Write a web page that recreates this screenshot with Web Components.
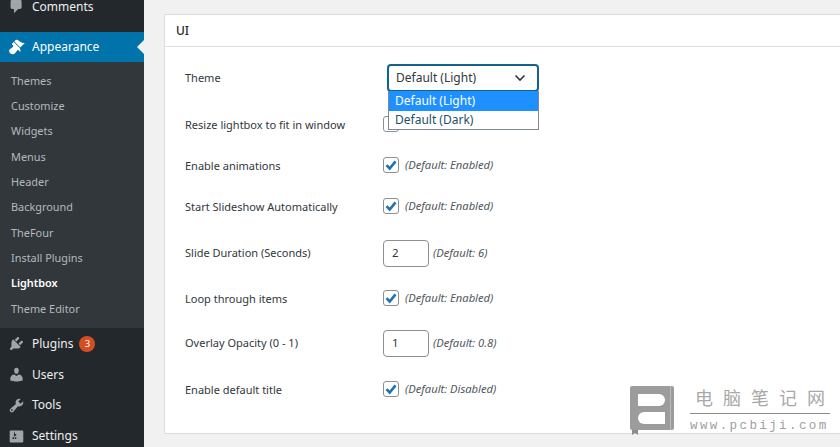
<!DOCTYPE html>
<html lang="en">
<head>
<meta charset="utf-8">
<title>Lightbox settings</title>
<style>
  html, body { margin: 0; height: 447px; overflow: hidden; background: #f1f1f1; }
  body { display: flex; font: 11.7px/1.3 "Noto Sans", sans-serif; color: #444; }
</style>
</head>
<body>
<wp-sidebar>
  <wp-menu-item icon="comments" style="margin-bottom:10px">Comments</wp-menu-item>
  <wp-menu-item icon="appearance" current>Appearance</wp-menu-item>
  <wp-submenu>
    <wp-sub-item>Themes</wp-sub-item>
    <wp-sub-item>Customize</wp-sub-item>
    <wp-sub-item>Widgets</wp-sub-item>
    <wp-sub-item>Menus</wp-sub-item>
    <wp-sub-item>Header</wp-sub-item>
    <wp-sub-item>Background</wp-sub-item>
    <wp-sub-item>TheFour</wp-sub-item>
    <wp-sub-item>Install Plugins</wp-sub-item>
    <wp-sub-item active>Lightbox</wp-sub-item>
    <wp-sub-item>Theme Editor</wp-sub-item>
  </wp-submenu>
  <wp-menu-item icon="plugins" badge="3">Plugins</wp-menu-item>
  <wp-menu-item icon="users">Users</wp-menu-item>
  <wp-menu-item icon="tools">Tools</wp-menu-item>
  <wp-menu-item icon="settings">Settings</wp-menu-item>
</wp-sidebar>

<settings-card heading="UI">
  <settings-row label="Theme" style="--h:47px">
    <theme-select value="Default (Light)"></theme-select>
  </settings-row>
  <settings-row label="Resize lightbox to fit in window" style="--h:47px">
    <check-field></check-field>
  </settings-row>
  <settings-row label="Enable animations" style="--h:35px">
    <check-field hint="(Default: Enabled)"></check-field>
  </settings-row>
  <settings-row label="Start Slideshow Automatically" style="--h:47px">
    <check-field hint="(Default: Enabled)"></check-field>
  </settings-row>
  <settings-row label="Slide Duration (Seconds)" style="--h:45px">
    <number-field value="2" hint="(Default: 6)"></number-field>
  </settings-row>
  <settings-row label="Loop through items" style="--h:47px">
    <check-field hint="(Default: Enabled)"></check-field>
  </settings-row>
  <settings-row label="Overlay Opacity (0 - 1)" style="--h:41px">
    <number-field value="1" hint="(Default: 0.8)"></number-field>
  </settings-row>
  <settings-row label="Enable default title" style="--h:53px">
    <check-field hint="(Default: Disabled)"></check-field>
  </settings-row>
</settings-card>

<site-watermark></site-watermark>

<script>
const ICONS = {
  comments: "M5 2h9c1.1 0 2 .9 2 2v7c0 1.1-.9 2-2 2h-2l-5 5v-5H5c-1.1 0-2-.9-2-2V4c0-1.1.9-2 2-2z",
  appearance: "M14.48 11.06L7.41 3.99l1.5-1.5c.5-.56 2.3-.47 3.51.32 1.21.8 1.43 1.28 2.91 2.1 1.18.64 2.45 1.26 4.45.85zm-.71.71L6.7 4.7 4.93 6.47c-.39.39-.39 1.02 0 1.41l1.06 1.06c.39.39.39 1.03 0 1.42-.6.6-1.43 1.11-2.21 1.69-.35.26-.7.53-1.01.84C1.43 13.23.4 15.6 2.6 17.8c2.21 2.2 4.57 1.17 5.93-.19.31-.31.58-.66.84-1.01.58-.78 1.09-1.61 1.69-2.21.39-.39 1.02-.39 1.41 0l1.06 1.06c.39.39 1.02.39 1.41 0z",
  plugins: "M13.11 4.36L9.87 7.6 8 5.73l3.24-3.24c.35-.34 1.05-.2 1.56.32.52.51.66 1.21.31 1.55zm-8 1.77l.91-1.12 9.01 9.01-1.19.84c-.71.71-2.63 1.16-3.82 1.16H6.14L4.9 17.26c-.59.59-1.54.59-2.12 0-.59-.58-.59-1.53 0-2.12l1.24-1.24v-3.88c0-1.13.4-3.19 1.09-3.89zm7.26 3.97l3.24-3.24c.34-.35 1.04-.21 1.55.31.52.51.66 1.21.31 1.55l-3.24 3.25z",
  users: "M10 9.25c-2.27 0-2.73-3.44-2.73-3.44C7 4.02 7.82 2 9.97 2c2.16 0 2.98 2.02 2.71 3.81 0 0-.41 3.44-2.68 3.44zm0 2.57L12.72 10c2.39 0 4.52 2.33 4.52 4.53v2.49s-3.65 1.13-7.24 1.13c-3.65 0-7.24-1.13-7.24-1.13v-2.49c0-2.25 1.94-4.48 4.47-4.48z",
  tools: "M16.68 9.77c-1.34 1.34-3.3 1.67-4.95.99l-5.41 6.52c-.99.99-2.59.99-3.58 0s-.99-2.59 0-3.57l6.52-5.42c-.68-1.65-.35-3.61.99-4.95 1.28-1.28 3.12-1.62 4.72-1.06l-2.89 2.89 2.82 2.82 2.86-2.87c.53 1.58.18 3.39-1.08 4.65zM3.81 16.21c.4.39 1.04.39 1.43 0 .4-.4.4-1.04 0-1.43-.39-.4-1.03-.4-1.43 0-.39.39-.39 1.03 0 1.43z",
  settings: "M18 16V4c0-.55-.45-1-1-1H3c-.55 0-1 .45-1 1v12c0 .55.45 1 1 1h14c.55 0 1-.45 1-1zM8 11h1c.55 0 1 .45 1 1s-.45 1-1 1H8v1.5c0 .28-.22.5-.5.5s-.5-.22-.5-.5V13H6c-.55 0-1-.45-1-1s.45-1 1-1h1V5.5c0-.28.22-.5.5-.5s.5.22.5.5V7h1c.55 0 1 .45 1 1s-.45 1-1 1h-1v5.5c0 .28-.22.5-.5.5s-.5-.22-.5-.5V9z"
};

class WpSidebar extends HTMLElement {
  constructor() {
    super();
    this.attachShadow({ mode: "open" }).innerHTML = `
      <style>
        :host { display: block; flex: none; width: 144px; height: 447px; overflow: hidden; background: #23282d; }
        div { margin-top: -9px; }
      </style>
      <div><slot></slot></div>`;
  }
}

class WpMenuItem extends HTMLElement {
  constructor() {
    super();
    const icon = ICONS[this.getAttribute("icon")];
    const badge = this.getAttribute("badge");
    this.attachShadow({ mode: "open" }).innerHTML = `
      <style>
        :host { display: flex; align-items: center; position: relative; height: 30.8px; padding-left: 8px; color: #eee; font-size: 12px; }
        :host([current]) { background: #0073aa; color: #fff; height: 30px; }
        svg { width: 17px; height: 17px; fill: #a0a5aa; margin-right: 7px; flex: none; }
        :host([current]) svg { fill: #fff; }
        .badge { margin-left: 6px; width: 16px; height: 16px; border-radius: 50%; background: #d54e21; color: #fff; font-size: 9.5px; line-height: 16px; text-align: center; }
        :host([current])::after { content: ""; position: absolute; right: 0; top: 8px; border: 7px solid transparent; border-right-color: #f1f1f1; border-left-width: 0; }
      </style>
      <svg viewBox="0 0 20 20"><path d="${icon}"/></svg>
      <slot></slot>
      ${badge ? `<span class="badge">${badge}</span>` : ""}`;
  }
}

class WpSubmenu extends HTMLElement {
  constructor() {
    super();
    this.attachShadow({ mode: "open" }).innerHTML = `
      <style>
        :host { display: block; background: #32373c; padding: 6.5px 0 7px; }
      </style>
      <slot></slot>`;
  }
}

class WpSubItem extends HTMLElement {
  constructor() {
    super();
    this.attachShadow({ mode: "open" }).innerHTML = `
      <style>
        :host { display: flex; align-items: center; height: 25.3px; padding-left: 11px; color: #b4b9be; font-size: 10.9px; }
        :host([active]) { color: #fff; font-weight: 600; }
      </style>
      <slot></slot>`;
  }
}

class SettingsCard extends HTMLElement {
  constructor() {
    super();
    this.attachShadow({ mode: "open" }).innerHTML = `
      <style>
        :host { display: block; flex: 1; height: 420px; margin: 14px 0 0 20px; box-sizing: border-box; background: #fff; border: 1px solid #ddd; border-right: 0; }
        h2 { margin: 0; height: 31px; display: flex; align-items: center; padding-left: 11px; border-bottom: 1px solid #e0e0e0; font-size: 12px; font-weight: 500; color: #23282d; }
        .rows { padding-top: 8px; }
      </style>
      <h2>${this.getAttribute("heading")}</h2>
      <div class="rows"><slot></slot></div>`;
  }
}

class SettingsRow extends HTMLElement {
  constructor() {
    super();
    this.attachShadow({ mode: "open" }).innerHTML = `
      <style>
        :host { display: grid; grid-template-columns: 198px 1fr; align-items: center; height: var(--h); padding-left: 20px; color: #32373c; font-size: 11px; }
      </style>
      <span>${this.getAttribute("label")}</span>
      <div><slot></slot></div>`;
  }
}

class CheckField extends HTMLElement {
  constructor() {
    super();
    const hint = this.getAttribute("hint");
    this.attachShadow({ mode: "open" }).innerHTML = `
      <style>
        :host { display: flex; align-items: center; gap: 6px; margin-top: -3px; font-size: 11.2px; font-style: italic; color: #50575e; }
        .box { width: 14px; height: 14px; border: 1px solid #8c8f94; border-radius: 3px; background: #fff; display: flex; }
        svg { width: 14px; height: 14px; fill: none; stroke: #2271b1; stroke-width: 2.6; }
      </style>
      <span class="box">${hint ? `<svg viewBox="0 0 14 14"><path d="M2.500 7.200l3.200 3.300L11.500 3.400"/></svg>` : ""}</span>
      ${hint ? `<span>${hint}</span>` : ""}`;
  }
}

class NumberField extends HTMLElement {
  constructor() {
    super();
    this.attachShadow({ mode: "open" }).innerHTML = `
      <style>
        :host { display: flex; align-items: center; gap: 4px; margin-top: -1px; font-size: 11.2px; font-style: italic; color: #50575e; }
        .num { box-sizing: border-box; width: 46px; height: 27px; padding-left: 8px; display: flex; align-items: center; border: 1px solid #8c8f94; border-radius: 4px; background: #fff; color: #32373c; font-size: 11.5px; font-style: normal; }
      </style>
      <span class="num">${this.getAttribute("value")}</span>
      <span>${this.getAttribute("hint")}</span>`;
  }
}

class ThemeSelect extends HTMLElement {
  constructor() {
    super();
    const value = this.getAttribute("value");
    this.attachShadow({ mode: "open" }).innerHTML = `
      <style>
        :host { display: block; position: relative; width: 152px; height: 28px; margin: -1px 0 0 4px; font-size: 12px; color: #32373c; }
        .field { box-sizing: border-box; height: 28px; display: flex; align-items: center; justify-content: space-between; padding: 0 11px 0 7px; border: 2px solid #11648d; border-radius: 4px; background: #fff; }
        svg { width: 12px; height: 8px; fill: none; stroke: #32373c; stroke-width: 1.6; }
        .list { position: absolute; z-index: 1; left: 1px; right: 0; top: 27px; border: 1px solid #7e8993; border-top: 0; background: #fff; color: #1f4f69; }
        .list div { height: 18.5px; padding-left: 6px; display: flex; align-items: center; }
        .list .on { height: 19.5px; background: #1e90ff; color: #fff; }
      </style>
      <div class="field"><span>${value}</span><svg viewBox="0 0 12 8"><path d="M1.500 1.500L6 6l4.500-4.500"/></svg></div>
      <div class="list"><div class="on">${value}</div><div>Default (Dark)</div></div>`;
  }
}

class SiteWatermark extends HTMLElement {
  constructor() {
    super();
    this.attachShadow({ mode: "open" }).innerHTML = `
      <style>
        :host { position: absolute; left: 630px; top: 386px; width: 200px; height: 50px; display: flex; gap: 16px; }
        .logo { position: relative; flex: none; width: 44px; height: 44px; border-radius: 2px; background: #9c9c9c; }
        .logo i { position: absolute; left: 8px; width: 27px; height: 11.500px; background: #fff; border-radius: 6px 0 0 6px; }
        .logo i:first-child { top: 8px; border-radius: 0 6px 6px 0; }
        .logo i:nth-child(2) { top: 26px; }
        .logo b { position: absolute; right: 3px; top: 0; bottom: 0; width: 1px; background: #bbb; }
        .logo u { position: absolute; left: 2px; top: 44px; border: 3px solid #8c8c8c; border-bottom-color: transparent; border-bottom-width: 2px; }
        .text { flex: 1; margin-top: 1px; color: #a0a0a0; }
        .cn { font: 400 18px/20px "Noto Sans CJK SC", sans-serif; display: flex; justify-content: space-between; padding: 0 5px; color: #a8a8a8; border-bottom: 1px solid #8c8c8c; height: 26px; }
        .en { font: 12.500px/16px "Liberation Mono", monospace; letter-spacing: 2.400px; margin-top: 4px; white-space: nowrap; color: #a0a0a0; }
      </style>
      <div class="logo"><i></i><i></i><b></b><u></u></div>
      <div class="text">
        <div class="cn"><span>电</span><span>脑</span><span>笔</span><span>记</span><span>网</span></div>
        <div class="en">www.pcbiji.com</div>
      </div>`;
  }
}

customElements.define("wp-sidebar", WpSidebar);
customElements.define("wp-menu-item", WpMenuItem);
customElements.define("wp-submenu", WpSubmenu);
customElements.define("wp-sub-item", WpSubItem);
customElements.define("settings-card", SettingsCard);
customElements.define("settings-row", SettingsRow);
customElements.define("check-field", CheckField);
customElements.define("number-field", NumberField);
customElements.define("theme-select", ThemeSelect);
customElements.define("site-watermark", SiteWatermark);
</script>
</body>
</html>
